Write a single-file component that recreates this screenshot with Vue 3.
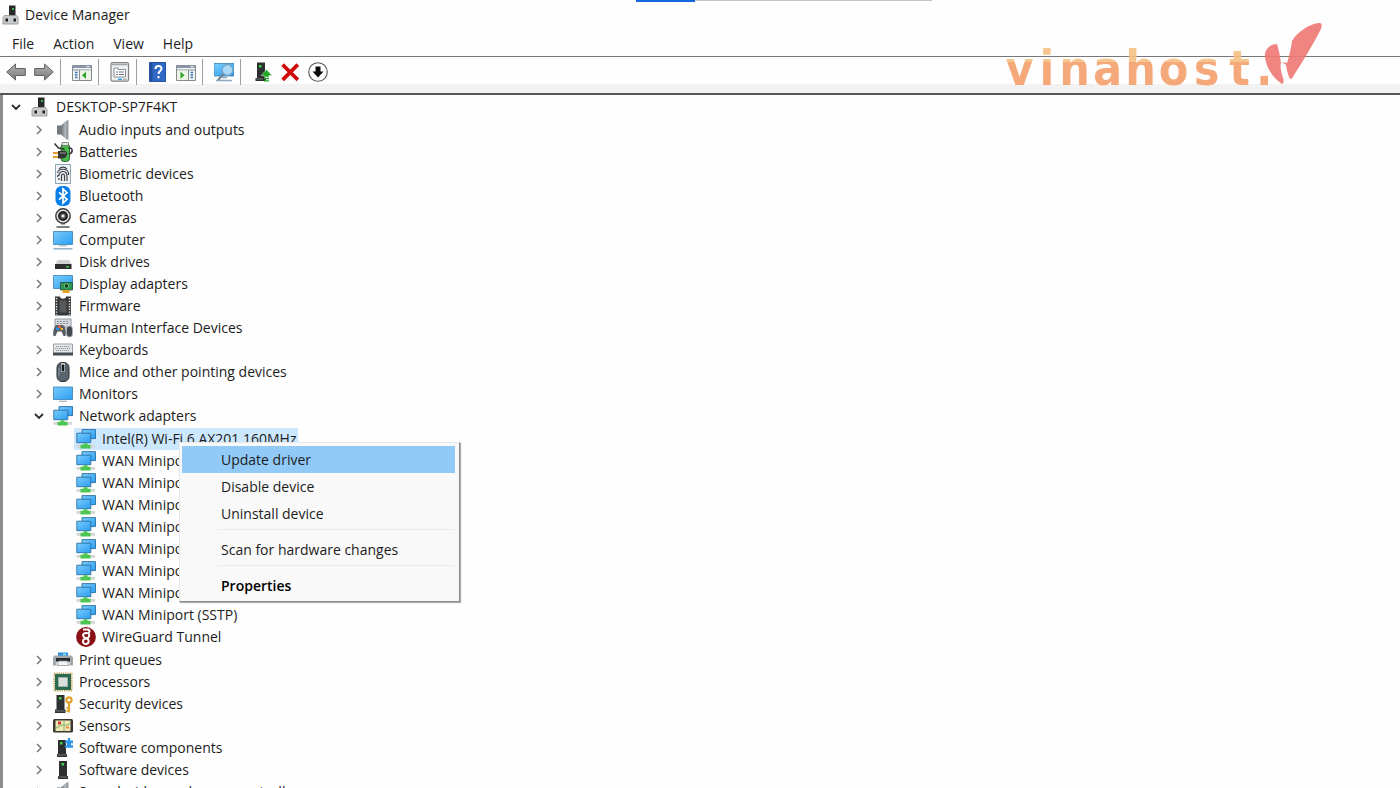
<template>
  <div class="window">
    <!-- 图标库 -->
    <svg class="sprite" aria-hidden="true">
      <defs>
        <linearGradient id="screen" x1="0" y1="0" x2="1" y2="1">
          <stop offset="0" stop-color="#7accfb" />
          <stop offset="1" stop-color="#2b9df2" />
        </linearGradient>
        <linearGradient id="metal" x1="0" y1="0" x2="1" y2="0">
          <stop offset="0" stop-color="#6f7479" />
          <stop offset="1" stop-color="#c3c8cc" />
        </linearGradient>
        <linearGradient id="arrow" x1="0" y1="0" x2="0" y2="1">
          <stop offset="0" stop-color="#b0b0b0" />
          <stop offset="1" stop-color="#7c7c7c" />
        </linearGradient>

        <symbol id="i-machine" viewBox="0 0 20 20">
          <path d="M8 .5h6.500v10H8z" fill="#26282a" />
          <path d="M11 3h2v2h-2z" fill="#35b34a" />
          <path d="M3.500 10.500h12l1.500 2v6.500H2v-6.500z" fill="#c9cbcc" stroke="#8b8d8e" stroke-width=".8" />
          <path d="M4.500 13.500h2.500v3H4.500zM12.500 13.500H15v3h-2.500z" fill="#1d1d1d" />
        </symbol>
        <symbol id="i-audio" viewBox="0 0 20 20">
          <path d="M4 5.500h4.500v9H4z" fill="#72797f" />
          <path d="M8 5.500L13.500 .500v19L8 14.500z" fill="url(#metal)" />
          <path d="M13 1l2.500-1v20l-2.500-1z" fill="#969da4" />
        </symbol>
        <symbol id="i-battery" viewBox="0 0 20 20">
          <rect x="8" y="2" width="8.500" height="17.500" rx="3" fill="#45bd49" stroke="#37633a" />
          <path d="M9 .5h6.500v3H9z" fill="#dce8dc" stroke="#666" stroke-width=".7" />
          <path d="M1.500 1.500l4 4.500 6 1M16 12c4.500-1 4-7-.5-6" fill="none" stroke="#333" stroke-width="1.500" />
          <path d="M0 11h6M0 15h6" stroke="#e39b2d" stroke-width="1.900" />
          <path d="M5 9h3c3-1.500 6 0 6.500 3-1 3.500-3.500 5-6.500 4.500H5z" fill="#353535" />
          <path d="M7 11h6" stroke="#999" />
        </symbol>
        <symbol id="i-finger" viewBox="0 0 20 20">
          <path d="M2.500.500h15v19h-15z" fill="#eef3f7" stroke="#8da4b5" />
          <path d="M6 5c2-2.500 6-2.500 8 0M4.500 9c1-5 10-5 11 0v2M6 12c-.5-6 8-6 8 0v5M8.500 17v-5c0-2.500 3-2.500 3 0v5M5 11l-.5 2M6 14v2" fill="none" stroke="#3d4145" stroke-width="1.200" />
        </symbol>
        <symbol id="i-bluetooth" viewBox="0 0 20 20">
          <rect x="2.500" y="0" width="15" height="20" rx="6" fill="#087ee8" />
          <path d="M6 6.300l8 7-4 3.700V3l4 3.700-8 7" fill="none" stroke="#fff" stroke-width="1.700" />
        </symbol>
        <symbol id="i-camera" viewBox="0 0 20 20">
          <circle cx="10" cy="8" r="7.200" fill="#e8e8e8" stroke="#3b3b3b" stroke-width="1.500" />
          <circle cx="10" cy="8" r="3.800" fill="#777" stroke="#222" stroke-width="2.400" />
          <circle cx="10" cy="8" r="1.300" fill="#eee" />
          <path d="M8 15.800h4M3.500 19h13" stroke="#555" stroke-width="1.400" />
        </symbol>
        <symbol id="i-computer" viewBox="0 0 20 20">
          <path d="M.5 1.500h19v13H.5z" fill="url(#screen)" stroke="#3781b6" stroke-width=".8" />
          <path d="M6 15.700h8" stroke="#bcc9d3" stroke-width="1.500" />
          <path d="M.5 18.800h19" stroke="#86a9c5" stroke-width="1.400" />
        </symbol>
        <symbol id="i-disk" viewBox="0 0 20 20">
          <path d="M4.500 8h12l2 4.500H2z" fill="#d0d2d3" />
          <path d="M2 12h16.500v5H2z" fill="#2b2d2e" />
          <path d="M13 14h3v1.500h-3z" fill="#40c64e" />
        </symbol>
        <symbol id="i-display" viewBox="0 0 20 20">
          <path d="M.5 1.500h19v13H.5z" fill="url(#screen)" stroke="#3781b6" stroke-width=".8" />
          <path d="M7.500 8.500h12v7.500h-12z" fill="#2f9353" stroke="#285237" stroke-width=".8" />
          <circle cx="13.500" cy="12" r="2.200" fill="#1b3524" stroke="#65c97b" />
          <path d="M9.500 16h7v3h-7z" fill="#e4a32b" />
        </symbol>
        <symbol id="i-firmware" viewBox="0 0 20 20">
          <path d="M2 .5h5c0 3 6 3 6 0h5v19H2z" fill="#353739" />
          <path d="M6.500 4.500h7v12h-7z" fill="#57595b" />
          <path d="M3.500 2v17M16.500 2v17" stroke="#e7e7e7" stroke-width="1.500" stroke-dasharray="1.300 1.400" />
        </symbol>
        <symbol id="i-hid" viewBox="0 0 20 20">
          <path d="M2 1h16v8H2z" fill="#d6dade" stroke="#949ba2" />
          <path d="M4 3.500h12M4 5.500h12" stroke="#8e969d" stroke-dasharray="2 1" />
          <path d="M.5 18c-1-5 1-10 3-11h6c3 1 4 6 3 11h-2l-2-4.500H4.500l-2 4.500z" fill="#565c63" />
          <path d="M5 7.500h3v2.500H5z" fill="#ed5b3c" /><path d="M3 9.500h3V12H3z" fill="#2a8ee5" /><path d="M7.500 10h2.500v2H7.500z" fill="#f1b72f" />
          <rect x="13.500" y="8" width="6" height="11" rx="3" fill="#44494e" stroke="#b2b7bb" stroke-width=".8" />
        </symbol>
        <symbol id="i-keyboard" viewBox="0 0 20 20">
          <path d="M.5 4h19v10.500H.5z" fill="#e6e8ea" stroke="#9aa0a5" />
          <path d="M3 6.500h14.500M2 8.500h16M3 10.500h14" stroke="#8b9197" stroke-width="1" stroke-dasharray="1.200 .8" />
          <path d="M0 12.500h20v3H0z" fill="#474c51" />
        </symbol>
        <symbol id="i-mouse" viewBox="0 0 20 20">
          <rect x="4" y=".5" width="12" height="19" rx="5" fill="#59636e" stroke="#292e33" />
          <path d="M10 1v9" stroke="#c9d0d6" stroke-width="3.600" />
          <rect x="8.800" y="2.500" width="2.400" height="7" rx="1.200" fill="#17191b" />
          <path d="M6 6v8" stroke="#8f9aa4" />
        </symbol>
        <symbol id="i-monitor" viewBox="0 0 20 20">
          <path d="M.5 3h19v12.500H.5z" fill="url(#screen)" stroke="#3781b6" stroke-width=".8" />
          <path d="M6 17.300h8" stroke="#a9b6c0" stroke-width="1.200" />
        </symbol>
        <symbol id="i-network" viewBox="0 0 20 20">
          <path d="M6 .6h13.500v9H6z" fill="url(#screen)" stroke="#286fa5" stroke-width=".9" />
          <path d="M.8 4.200h14v9.500H.8z" fill="url(#screen)" stroke="#286fa5" stroke-width=".9" />
          <path d="M.5 16h18.500v2.800H.5z" fill="#d4d8d5" />
          <path d="M7.500 14.200h4v1.500h3v3.800h-10v-3.800h3z" fill="#4cc552" />
        </symbol>
        <symbol id="i-wireguard" viewBox="0 0 20 20">
          <circle cx="10" cy="10" r="9.900" fill="#8a1016" />
          <path d="M7 2.500h5c2.500 1 1.500 3.500-.5 3.700M11.500 6.200c-3-.7-5 .8-4.300 2.800.8 2.500 5.500 1.500 5.500 5 0 2-1.500 3-3 3s-3-1.200-2.700-3c.2-1.500 1.500-2.300 3-2.500 3-.4 4.200-2.800 2.500-5.300" fill="none" stroke="#fff" stroke-width="2" />
        </symbol>
        <symbol id="i-printer" viewBox="0 0 20 20">
          <path d="M5 2.500h10v4H5z" fill="#2d91e3" /><path d="M10 3.500h3v2h-3z" fill="#83ddfb" />
          <path d="M1.500 5.500h17l1.500 2v8h-3.500v-4h-13v4H0v-8z" fill="#a2a7ab" />
          <path d="M3 8h14v3.500H3z" fill="#282a2c" />
          <path d="M5.500 11h9l1 4.500h-11z" fill="#f3f4f5" stroke="#888" stroke-width=".7" />
        </symbol>
        <symbol id="i-cpu" viewBox="0 0 20 20">
          <path d="M1.200 1.200h17.600v17.600H1.200z" fill="none" stroke="#bd9d47" stroke-width="1.600" stroke-dasharray="1.200 1" />
          <path d="M2 2h16v16H2z" fill="#2d6850" />
          <path d="M5.500 5.500h9v9h-9z" fill="#dcdedd" stroke="#9cb5a8" />
        </symbol>
        <symbol id="i-security" viewBox="0 0 20 20">
          <path d="M3.500 1h8v14.500h1V19H2v-3.500h1.500z" fill="#2d2f31" />
          <path d="M6 3h2.500v2.500H6z" fill="#42cf4f" /><path d="M2.500 17h9" stroke="#777" />
          <circle cx="16" cy="6" r="2.600" fill="#fff" stroke="#dea32d" stroke-width="2.200" />
          <path d="M16 8.500v10M13.500 14H16M13.500 17H16" stroke="#dea32d" stroke-width="2" />
        </symbol>
        <symbol id="i-sensor" viewBox="0 0 20 20">
          <rect x="0" y="3" width="20" height="13.500" rx="1.500" fill="#3b3631" />
          <path d="M2.500 4.500h15v10.500h-15z" fill="#efe7b4" />
          <path d="M3 12c4-1 4-4 9-3s3-2 5-2M11 5v10" fill="none" stroke="#8fbd78" stroke-width="1.200" />
          <path d="M5 5.500h3v3H5z" fill="#dc3b33" /><path d="M13 10.500h3v2h-3z" fill="#e8903c" />
        </symbol>
        <symbol id="i-component" viewBox="0 0 20 20">
          <path d="M5 2h8v14h1v3H4v-3h1z" fill="#2d2f31" />
          <path d="M7 4h2.500v2.500H7z" fill="#42cf4f" /><path d="M4.500 17h9" stroke="#777" />
          <path d="M12 2.500h2.800V0h2.400v2.500H20v2.700h-2v2h2v2.600h-8V7.200h2v-2h-2z" fill="#2d96e8" />
        </symbol>
        <symbol id="i-software" viewBox="0 0 20 20">
          <path d="M6 1h8v15h1v3H5v-3h1z" fill="#2d2f31" />
          <path d="M8.500 3H11v2.500H8.500z" fill="#42cf4f" /><path d="M5.500 17h9" stroke="#777" />
        </symbol>

        <symbol id="i-back" viewBox="0 0 20 20">
          <path d="M.7 10L9.500 2v4.500h9.800v7H9.500V18z" fill="url(#arrow)" stroke="#626262" stroke-linejoin="round" />
        </symbol>
        <symbol id="i-forward" viewBox="0 0 20 20">
          <path d="M19.300 10L10.500 2v4.500H.7v7h9.800V18z" fill="url(#arrow)" stroke="#626262" stroke-linejoin="round" />
        </symbol>
        <symbol id="i-tree" viewBox="0 0 20 20">
          <path d="M.5 3.500h19v15H.5z" fill="#f4f5f6" stroke="#858b91" />
          <path d="M1 3.500h18v2.500H1z" fill="#8796a8" /><path d="M14.500 4.700h3" stroke="#fff" />
          <path d="M1 8h18M7.500 8v10" stroke="#858b91" />
          <path d="M3 10.500h2.500M3 13h2.500M3 15.500h2.500" stroke="#3976b2" stroke-width="1.300" />
          <path d="M8 8.500h11V18H8z" fill="#edf3e6" /><path d="M14 9.700v7l-4-3.500z" fill="#27a822" />
        </symbol>
        <symbol id="i-pane" viewBox="0 0 20 20">
          <path d="M.5 3.500h19v15H.5z" fill="#f4f5f6" stroke="#858b91" />
          <path d="M1 3.500h18v2.500H1z" fill="#8796a8" /><path d="M14.500 4.700h3" stroke="#fff" />
          <path d="M1 8h18M12.500 8v10" stroke="#858b91" />
          <path d="M14.500 10.500H17M14.500 13H17M14.500 15.500H17" stroke="#3976b2" stroke-width="1.300" />
          <path d="M1 8.500h11V18H1z" fill="#edf3e6" /><path d="M4.500 9.700v7l4-3.500z" fill="#27a822" />
        </symbol>
        <symbol id="i-props" viewBox="0 0 20 20">
          <rect x="1" y=".7" width="17.500" height="18.500" rx="1.500" fill="#eef0f1" stroke="#7e8386" stroke-width="1.200" />
          <path d="M2 2.500h15.500" stroke="#9fa6ab" stroke-width="1.500" />
          <path d="M4 6h4v1.500h7.500V15H4z" fill="#fff" stroke="#858c92" />
          <path d="M6 10h2M9 10h5M6 12.500h2M9 12.500h5" stroke="#68747e" />
          <path d="M8 17.300h4" stroke="#2ba3e7" stroke-width="1.500" /><path d="M13 17.300h3.500" stroke="#999" />
        </symbol>
        <symbol id="i-help" viewBox="0 0 20 20">
          <path d="M1.500.5h16v19h-16z" fill="#2f68c5" stroke="#2350a0" /><path d="M2 1h2.500v18H2z" fill="#234f9f" />
          <path d="M7.500 7c0-4 6-4 6-.5 0 2.500-3 2.500-3 5.500M10.500 14v2.200" fill="none" stroke="#fff" stroke-width="2" />
        </symbol>
        <symbol id="i-scan" viewBox="0 0 20 20">
          <path d="M0 1.500h20v12.500H0z" fill="url(#screen)" stroke="#3781b6" stroke-width=".8" />
          <path d="M2 18.500h16M8 15.500h5" stroke="#8aa9c2" stroke-width="1.300" />
          <path d="M10 11.500l-6 6.500" stroke="#70808d" stroke-width="2" />
          <circle cx="13.500" cy="8" r="5.300" fill="#a9d9f6" stroke="#76a5c5" stroke-width="1.200" />
        </symbol>
        <symbol id="i-update" viewBox="0 0 20 20">
          <path d="M5 .5h8V16h1v3H3.500v-3H5z" fill="#2d2f31" /><path d="M7 3h2.500v2.500H7z" fill="#42cf4f" />
          <path d="M4 17h7" stroke="#777" />
          <path d="M14.500 7.500l5.500 6h-3V15h-5v-1.500H9z" fill="#22a827" stroke="#fff" stroke-width=".4" />
          <path d="M12 16.500h5M12 18.800h5" stroke="#22a827" stroke-width="1.300" />
        </symbol>
        <symbol id="i-remove" viewBox="0 0 20 20">
          <path d="M4 4l12.500 12.500M16.500 4L4 16.500" stroke="#cf0a0a" stroke-width="3.800" stroke-linecap="square" />
        </symbol>
        <symbol id="i-down" viewBox="0 0 20 20">
          <circle cx="10" cy="10" r="9.300" fill="#fff" stroke="#555" stroke-width="1.100" />
          <path d="M7.500 4.500h5v5h3L10 15.500l-5.500-6h3z" fill="#0c0c0c" />
        </symbol>
      </defs>
    </svg>

    <div class="top-strip"><span class="top-strip__active"></span></div>

    <!-- 标题栏 -->
    <header class="titlebar">
      <svg class="icon"><use href="#i-machine" /></svg>
      <h1 class="titlebar__text">Device Manager</h1>
    </header>

    <!-- 菜单栏 -->
    <nav class="menubar">
      <button v-for="m in menus" :key="m" type="button" class="menubar__item">{{ m }}</button>
    </nav>

    <!-- 工具栏 -->
    <div class="toolbar">
      <div v-for="(group, i) in tools" :key="i" class="toolbar__group">
        <button v-for="t in group" :key="t.icon" type="button" class="toolbar__btn" :aria-label="t.label">
          <svg class="icon"><use :href="'#i-' + t.icon" /></svg>
        </button>
      </div>
    </div>

    <!-- 水印标志 -->
    <div class="logo">
      <div class="logo__text"><span v-for="(c, i) in logoChars" :key="i">{{ c }}</span></div>
      <svg class="logo__mark" viewBox="0 0 58 62">
        <path d="M13 22C5 22 0 29 1 35c1 10 7 20 17 27 2-1 2-4 1-6-2-6-3-12-2-15-1-7-2-13-4-19z" />
        <path d="M56 1C47 1 34 9 28 19c-1 8-3 16-5 22l-5-1 4 3c1 6 2 10 4 14 2 0 3-2 4-4C40 38 49 22 57 7c1-3 1-6-1-6z" />
      </svg>
    </div>

    <!-- 设备树 -->
    <main class="panel">
      <div class="row">
        <button type="button" class="chevron" aria-label="Collapse">
          <svg viewBox="0 0 10 10"><path d="M1 3l4 4 4-4" class="chevron__open" /></svg>
        </button>
        <span class="item"><svg class="icon"><use href="#i-machine" /></svg>DESKTOP-SP7F4KT</span>
      </div>
      <ul class="tree">
        <li v-for="node in nodes" :key="node.name">
          <div class="row">
            <button type="button" class="chevron" :aria-label="node.children ? 'Collapse' : 'Expand'">
              <svg viewBox="0 0 10 10">
                <path v-if="node.children" d="M1 3l4 4 4-4" class="chevron__open" />
                <path v-else d="M3 1l4 4-4 4" class="chevron__closed" />
              </svg>
            </button>
            <span class="item"><svg class="icon"><use :href="'#i-' + node.icon" /></svg>{{ node.name }}</span>
          </div>
          <ul v-if="node.children" class="tree tree--leaf">
            <li v-for="(child, i) in node.children" :key="i" class="row">
              <span class="item" :class="{ 'item--selected': i === selected }">
                <svg class="icon"><use :href="'#i-' + child.icon" /></svg>{{ child.name }}
              </span>
            </li>
          </ul>
        </li>
      </ul>
    </main>

    <!-- 右键菜单 -->
    <div class="context" role="menu">
      <template v-for="(entry, i) in actions" :key="i">
        <hr v-if="entry === '-'" class="context__sep" />
        <button
          v-else
          type="button"
          role="menuitem"
          class="context__item"
          :class="{ 'context__item--active': i === 0, 'context__item--default': entry === 'Properties' }"
        >{{ entry }}</button>
      </template>
    </div>
  </div>
</template>

<script setup>
import { ref } from 'vue'

const selected = ref(0)

const menus = ['File', 'Action', 'View', 'Help']
const logoChars = 'vinahost.'.split('')

const tools = [
  [{ icon: 'back', label: 'Back' }, { icon: 'forward', label: 'Forward' }],
  [{ icon: 'tree', label: 'Show console tree' }],
  [{ icon: 'props', label: 'Properties' }],
  [{ icon: 'help', label: 'Help' }, { icon: 'pane', label: 'Show action pane' }],
  [{ icon: 'scan', label: 'Scan for hardware changes' }],
  [
    { icon: 'update', label: 'Update driver' },
    { icon: 'remove', label: 'Uninstall device' },
    { icon: 'down', label: 'Disable device' }
  ]
]

const adapters = [
  { name: 'Intel(R) Wi-Fi 6 AX201 160MHz', icon: 'network' },
  ...Array.from({ length: 7 }, () => ({ name: 'WAN Miniport', icon: 'network' })),
  { name: 'WAN Miniport (SSTP)', icon: 'network' },
  { name: 'WireGuard Tunnel', icon: 'wireguard' }
]

const nodes = [
  { name: 'Audio inputs and outputs', icon: 'audio' },
  { name: 'Batteries', icon: 'battery' },
  { name: 'Biometric devices', icon: 'finger' },
  { name: 'Bluetooth', icon: 'bluetooth' },
  { name: 'Cameras', icon: 'camera' },
  { name: 'Computer', icon: 'computer' },
  { name: 'Disk drives', icon: 'disk' },
  { name: 'Display adapters', icon: 'display' },
  { name: 'Firmware', icon: 'firmware' },
  { name: 'Human Interface Devices', icon: 'hid' },
  { name: 'Keyboards', icon: 'keyboard' },
  { name: 'Mice and other pointing devices', icon: 'mouse' },
  { name: 'Monitors', icon: 'monitor' },
  { name: 'Network adapters', icon: 'network', children: adapters },
  { name: 'Print queues', icon: 'printer' },
  { name: 'Processors', icon: 'cpu' },
  { name: 'Security devices', icon: 'security' },
  { name: 'Sensors', icon: 'sensor' },
  { name: 'Software components', icon: 'component' },
  { name: 'Software devices', icon: 'software' },
  { name: 'Sound, video and game controllers', icon: 'audio' }
]

const actions = [
  'Update driver',
  'Disable device',
  'Uninstall device',
  '-',
  'Scan for hardware changes',
  '-',
  'Properties'
]
</script>

<style>
body {
  background: #fefefe;
}
</style>

<style scoped>
.window {
  position: relative;
  display: flex;
  flex-direction: column;
  height: 100vh;
  overflow: hidden;
  background: #fefefe;
  color: #1c1c1c;
  font-family: "Segoe UI", "Open Sans", "Noto Sans", sans-serif;
  font-size: 14px;
  line-height: 22px;
}

button {
  padding: 0;
  border: 0;
  background: none;
  color: inherit;
  font: inherit;
}

ul {
  margin: 0;
  padding: 0;
  list-style: none;
}

.sprite {
  position: absolute;
  width: 0;
  height: 0;
}

.icon {
  display: block;
  flex: none;
  width: 20px;
  height: 20px;
}

.top-strip {
  position: absolute;
  top: 0;
  left: 636px;
  width: 296px;
  height: 1px;
  background: #c4c4c4;
}

.top-strip__active {
  display: block;
  width: 59px;
  height: 2px;
  background: #1268dc;
}

/* ========== 标题与菜单 ========== */
.titlebar {
  display: flex;
  align-items: center;
  gap: 4px;
  height: 30px;
  padding-left: 1px;
}

.titlebar__text {
  margin: 0;
  font-size: 14px;
  font-weight: 400;
}

.menubar {
  display: flex;
  gap: 19px;
  height: 25px;
  padding: 1px 0 0 12px;
  border-bottom: 1px solid #777;
}

/* ========== 工具栏 ========== */
.toolbar {
  display: flex;
  align-items: center;
  height: 30px;
  padding-bottom: 6px;
  background: linear-gradient(#fefefe 27px, #f2f2f2 27px);
  border-bottom: 2px solid #555;
}

.toolbar__group {
  display: flex;
  align-items: center;
  gap: 8px;
  height: 26px;
  padding: 0 6px 0 11px;
  border-left: 1px solid #a0a0a0;
}

.toolbar__group:first-child {
  padding-left: 6px;
  border-left: 0;
}

/* ========== 水印 ========== */
.logo {
  position: absolute;
  top: 22px;
  right: 78px;
  display: flex;
  opacity: 0.9;
  pointer-events: none;
}

.logo__text {
  display: grid;
  grid-template-columns: 33px 22px repeat(6, 33px) 16px;
  height: 64px;
  background: linear-gradient(#f6c084 40px, #f5a06c 40px);
  -webkit-background-clip: text;
  background-clip: text;
  color: transparent;
  font-family: "DejaVu Sans Condensed", "DejaVu Sans", sans-serif;
  font-size: 48px;
  font-stretch: condensed;
  font-weight: 700;
  line-height: 92px;
  text-align: center;
}

.logo__mark {
  width: 58px;
  height: 62px;
  margin-left: -8px;
  fill: #ee7774;
}

/* ========== 设备树 ========== */
.panel {
  flex: 1;
  min-height: 0;
  overflow: hidden;
  padding: 1px 0 0 8px;
  border-left: 3px solid #8c8c8c;
}

.row {
  display: flex;
  height: 22px;
}

.tree {
  padding: 1px 0 0 23px;
}

.tree--leaf {
  padding: 1px 0 1px 40px;
}

.chevron {
  flex: none;
  width: 10px;
  margin-right: 7px;
}

.chevron svg {
  display: block;
  width: 10px;
  height: 10px;
}

.chevron path {
  fill: none;
}

.chevron__open {
  stroke: #2b2b2b;
  stroke-width: 1.8;
}

.chevron__closed {
  stroke: #707070;
  stroke-width: 1.4;
}

.item {
  display: flex;
  align-items: center;
  gap: 6px;
  padding: 0 1px 0 2px;
  white-space: nowrap;
}

.item--selected {
  background: #cce8ff;
}

/* ========== 右键菜单 ========== */
.context {
  position: absolute;
  top: 442px;
  left: 179px;
  display: flex;
  flex-direction: column;
  box-sizing: border-box;
  width: 281px;
  padding: 3px 4px 2px 2px;
  border: 1px solid #e8e8e8;
  border-right-color: #8a8a8a;
  border-bottom-color: #8a8a8a;
  background: #f9f9f9;
  box-shadow: 1px 1px 1px rgba(0, 0, 0, 0.3);
}

.context__item {
  height: 27px;
  padding-left: 39px;
  text-align: left;
}

.context__item--active {
  background: #91c9f7;
}

.context__item--default {
  color: #000;
  font-weight: 600;
}

.context__sep {
  width: 236px;
  height: 1px;
  margin: 2px 0 6px 36px;
  border: 0;
  background: #ebebeb;
}
</style>
